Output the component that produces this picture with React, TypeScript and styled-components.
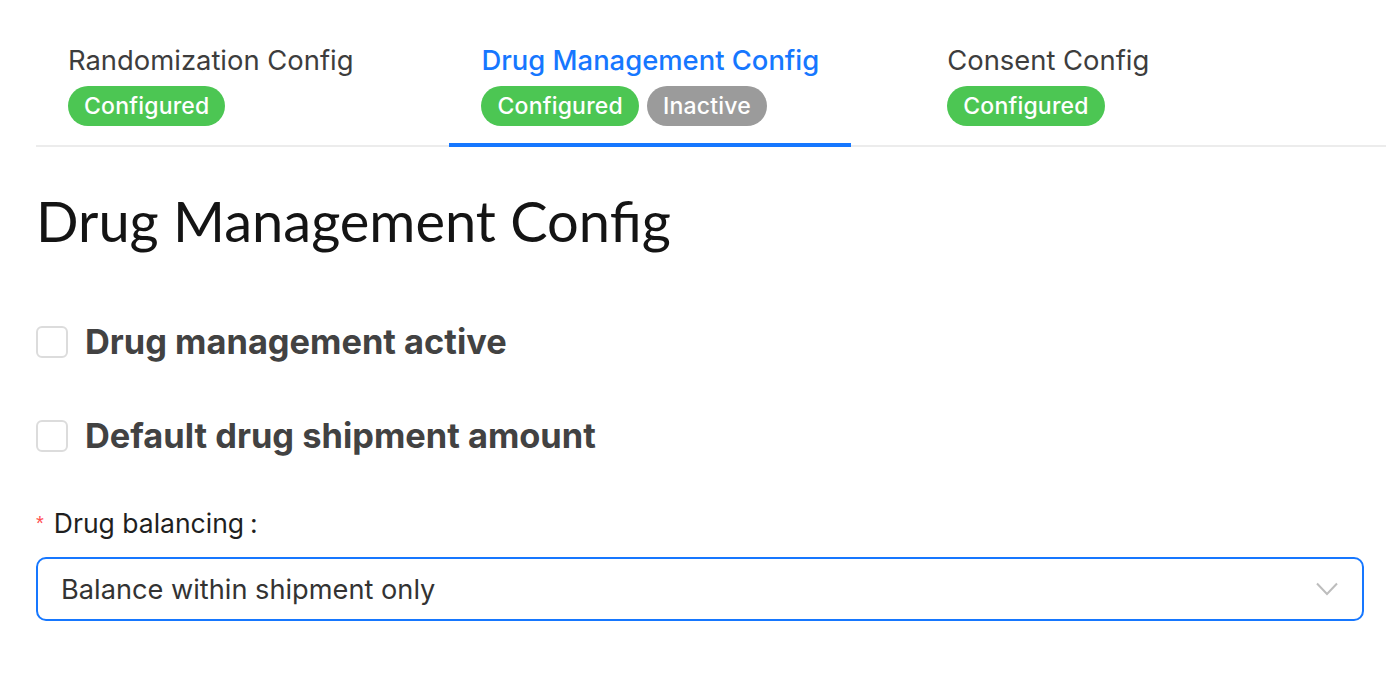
import * as React from 'react';
import styled, { createGlobalStyle } from 'styled-components';

const GlobalStyle = createGlobalStyle`
  body {
    margin: 0;
    background: #fff;
    font-family: Inter, "Noto Sans", sans-serif;
  }
`;

const Page = styled.div`
  padding: 0 22px 0 36px;
`;

const TabBar = styled.nav`
  display: flex;
  margin-right: -22px;
  border-bottom: 2px solid #ececec;
`;

const Tab = styled.div<{ $active?: boolean }>`
  display: flex;
  flex-direction: column;
  align-items: flex-start;
  gap: 8px;
  padding: 43px 32px 17px;
  margin-right: 64px;
  margin-bottom: -2px;
  border-bottom: 4px solid ${(p) => (p.$active ? '#1677ff' : 'transparent')};
`;

const TabTitle = styled.div<{ $active?: boolean }>`
  font-size: 27.4px;
  line-height: 35px;
  color: ${(p) => (p.$active ? '#1677ff' : '#3d3d3d')};
  font-weight: ${(p) => (p.$active ? 500 : 400)};
  white-space: nowrap;
`;

const Badges = styled.div`
  display: flex;
  gap: 8px;
`;

const Badge = styled.span<{ $tone: 'green' | 'gray' }>`
  display: inline-flex;
  align-items: center;
  height: 40px;
  padding: 0 16px;
  border-radius: 20px;
  background: ${(p) => (p.$tone === 'green' ? '#4cc653' : '#9b9b9b')};
  color: #fff;
  font-size: 23px;
  letter-spacing: 0.2px;
  font-weight: 500;
`;

const Heading = styled.h1`
  margin: 40px 0 0;
  font-family: Lato, sans-serif;
  font-weight: 400;
  font-size: 56px;
  line-height: 68px;
  color: #141414;
`;

const CheckRow = styled.label`
  display: flex;
  align-items: center;
  gap: 17px;
  margin-top: 64px;
  & + & {
    margin-top: 48px;
  }
`;

const Box = styled.span`
  width: 28px;
  height: 28px;
  border: 2px solid #dcdcdc;
  border-radius: 6px;
  flex-shrink: 0;
`;

const CheckLabel = styled.span`
  font-size: 34.4px;
  font-weight: 700;
  line-height: 46px;
  color: #424242;
`;

const FieldLabel = styled.div`
  margin-top: 48px;
  font-size: 26.5px;
  line-height: 32px;
  color: #1f1f1f;
  display: flex;
  align-items: center;
`;

const Required = styled.span`
  color: #ff4d4f;
  font-size: 20px;
  margin-right: 10px;
  font-family: SimSun, "Liberation Sans", sans-serif;
`;

const Colon = styled.span`
  margin: 0 4px 0 6px;
`;

const Select = styled.div`
  margin-top: 18px;
  height: 60px;
  border: 2px solid #1677ff;
  border-radius: 10px;
  display: flex;
  align-items: center;
  justify-content: space-between;
  padding: 0 24px 0 23px;
`;

const SelectValue = styled.span`
  font-size: 27.2px;
  color: #333;
`;

const Chevron = () => (
  <svg width="22" height="14" viewBox="0 0 22 14" fill="none">
    <path d="M1 1.5 L11 12 L21 1.5" stroke="#bdbdbd" strokeWidth="2" />
  </svg>
);

const App: React.FC = () => (
  <Page>
    <GlobalStyle />
    <TabBar>
      <Tab>
        <TabTitle>Randomization Config</TabTitle>
        <Badges>
          <Badge $tone="green">Configured</Badge>
        </Badges>
      </Tab>
      <Tab $active>
        <TabTitle $active>Drug Management Config</TabTitle>
        <Badges>
          <Badge $tone="green">Configured</Badge>
          <Badge $tone="gray">Inactive</Badge>
        </Badges>
      </Tab>
      <Tab>
        <TabTitle>Consent Config</TabTitle>
        <Badges>
          <Badge $tone="green">Configured</Badge>
        </Badges>
      </Tab>
    </TabBar>
    <Heading>Drug Management Config</Heading>
    <CheckRow>
      <Box />
      <CheckLabel>Drug management active</CheckLabel>
    </CheckRow>
    <CheckRow>
      <Box />
      <CheckLabel>Default drug shipment amount</CheckLabel>
    </CheckRow>
    <FieldLabel>
      <Required>*</Required>
      Drug balancing
      <Colon>:</Colon>
    </FieldLabel>
    <Select>
      <SelectValue>Balance within shipment only</SelectValue>
      <Chevron />
    </Select>
  </Page>
);

export default App;
